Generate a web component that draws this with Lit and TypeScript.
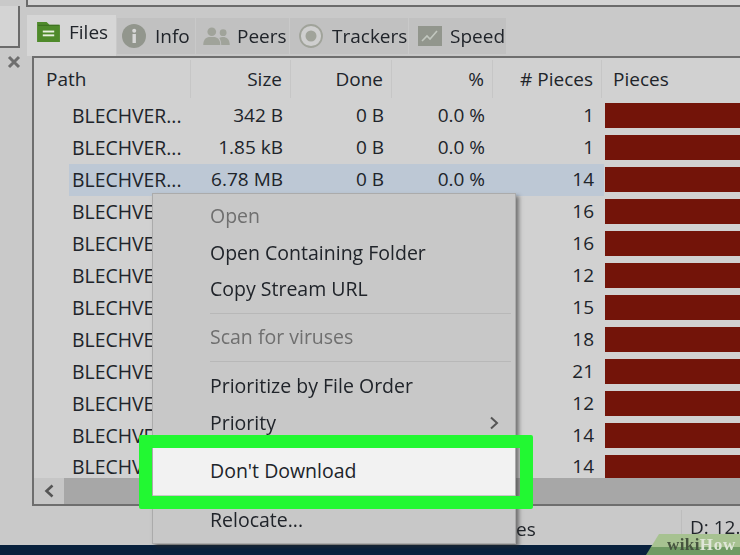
import { LitElement, html, css, svg } from "lit";
import { customElement } from "lit/decorators.js";

const counts = [1, 1, 14, 16, 16, 12, 15, 18, 21, 12, 14, 14];
const sizes = ["342 B", "1.85 kB", "6.78 MB"];

@customElement("app-root")
export class AppRoot extends LitElement {
  static styles = css`
    :host {
      display: block;
      position: relative;
      width: 740px;
      height: 555px;
      overflow: hidden;
      background: #c9c9c9;
      color: #20242a;
      font-family: "Open Sans", "Noto Sans", sans-serif;
      font-size: 19px;
    }
    .app {
      height: 555px;
      display: flex;
      flex-direction: column;
      filter: blur(0.45px);
    }
    .top {
      height: 7px;
      margin-left: 26px;
      flex: none;
      background: #d4d4d4;
      border: solid #6b6b6b;
      border-width: 0 0 2px 2px;
      box-sizing: border-box;
    }
    .middle { flex: 1; display: flex; min-height: 0; }
    .side { width: 32px; flex: none; display: flex; flex-direction: column; align-items: flex-start; }
    .side-box {
      width: 20px;
      height: 42px;
      box-sizing: border-box;
      background: #d4d4d4;
      border: solid #6b6b6b;
      border-width: 0 2px 2px 0;
      margin-top: -1px;
    }
    .close { margin: 7px 0 0 7px; display: block; }
    .main { flex: 1; min-width: 0; display: flex; flex-direction: column; }
    .tabs { display: flex; height: 49px; flex: none; padding: 8px 0 0 0; box-sizing: border-box; margin-left: -5px; gap: 1px; }
    .tab {
      display: flex;
      align-items: center;
      box-sizing: border-box;
      background: #c1c1c1;
      margin-top: 3px;
      height: 36px;
    }
    .tab.active { background: #d6d6d6; margin-top: 0; height: 41px; padding-bottom: 7px; }
    .t-files { width: 89px; padding-left: 10px; gap: 9px; }
    .t-info { width: 78px; padding-left: 5px; gap: 9px; }
    .t-peers { width: 93px; padding-left: 7px; gap: 7px; }
    .t-trackers { width: 118px; padding-left: 9px; gap: 9px; }
    .t-speed { width: 97px; padding-left: 9px; gap: 8px; }
    .panel {
      height: 450px;
      flex: none;
      box-sizing: border-box;
      background: #d1d1d1;
      border: solid #6e6e6e;
      border-width: 2px 0 2px 2px;
      display: flex;
      flex-direction: column;
      position: relative;
    }
    .row, .head {
      display: grid;
      grid-template-columns: 157px 100px 101px 101px 109px 1fr;
    }
    .head { height: 42px; flex: none; }
    .head > div { padding-right: 8px; text-align: right; border-right: 1px solid #c6c6c6; height: 38px; margin-top: 2px; line-height: 38px; }
    .head > div:first-child { text-align: left; padding-left: 12px; }
    .head > div:last-child { text-align: left; padding-left: 11px; border-right: none; }
    .rows { flex: 1; min-height: 0; overflow: hidden; }
    .row { height: 32px; line-height: 31px; position: relative; }
    .row > div { padding-right: 8px; text-align: right; white-space: nowrap; overflow: hidden; }
    .row > div:first-child { text-align: left; padding-left: 38px; padding-right: 0; font-size: 19.4px; }
    .row.sel { background: linear-gradient(to right, transparent 35px, #bdc8d5 35px, #bdc8d5 570px, transparent 570px); }
    .row > .bar { padding: 0; margin: 3px 0 4px 3px; background: #731409; height: 25px; }
    .row.last { height: 26px; line-height: 29px; }
    .row.last .bar { height: 23px; margin-bottom: 0; }
    .scroll { height: 26px; flex: none; background: #a7a7a7; display: flex; }
    .scroll .btn { width: 30px; background: #c6c6c6; display: flex; align-items: center; justify-content: center; }
    .status {
      flex: 1;
      position: relative;
      margin-left: -32px;
      background: #c9c9c9;
      min-height: 0;
    }
    .status .es { position: absolute; left: 516px; top: 10px; }
    .status .d { position: absolute; left: 690px; top: 8px; white-space: nowrap; }
    .status .div { position: absolute; left: 681px; top: 4px; bottom: 0; width: 1px; background: #bdbdbd; }
    .task { height: 10px; flex: none; background: #08213d; }

    .menu {
      position: absolute;
      left: 152px;
      top: 193px;
      width: 364px;
      height: 351px;
      box-sizing: border-box;
      background: #c8c8c8;
      border: 1px solid #ababab;
      box-shadow: 3px 3px 4px rgba(40, 40, 40, 0.55);
      padding-top: 4px;
      filter: blur(0.45px);
    }
    .mi { height: 36.5px; line-height: 35.5px; padding-left: 57px; position: relative; white-space: nowrap; font-size: 19.5px; }
    .mi.dis { color: #6f6f6f; }
    .mi.hot { background: #f2f2f2; height: 48px; line-height: 47px; margin-top: 6px; margin-bottom: 7px; }
    .mi .arrow { position: absolute; right: 16px; top: 11px; display: block; }
    .sep { height: 1px; background: #b8b8b8; margin: 5px 4px 5px 57px; }
    .sep.b { margin-top: 6px; margin-bottom: 6px; }
    .mark {
      position: absolute;
      left: 139px;
      top: 435px;
      width: 394px;
      height: 74px;
      box-sizing: border-box;
      border: 13px solid #22f832;
      border-radius: 2px;
    }
    .wh {
      position: absolute;
      right: 0;
      bottom: 0;
      width: 94px;
      height: 21px;
      background: linear-gradient(to bottom, #a7c291 0, #a7c291 60%, #6f9a63 60%, #6f9a63 100%);
      clip-path: polygon(13px 0, 100% 0, 100% 100%, 0 100%);
      font-family: "Liberation Serif", serif;
      font-weight: 700;
      font-size: 17px;
      line-height: 22px;
      padding-left: 21px;
      box-sizing: border-box;
      color: #46543f;
      white-space: nowrap;
      letter-spacing: 0.4px;
      filter: blur(0.4px);
    }
    .wh b { color: #dfe6d8; letter-spacing: 0.8px; }
  `;

  private icon(kind: string) {
    const g = "#92968d";
    if (kind === "files")
      return svg`<svg width="23" height="20" viewBox="0 0 24 21"><path d="M0 0h10l3 3h11v18H0z" fill="#4f8a2b"/><path d="M1 3.500h22" stroke="#3b6d20" stroke-width="1"/><rect x="6" y="9" width="12" height="2" fill="#e8f0e0"/><rect x="6" y="13" width="12" height="2" fill="#e8f0e0"/></svg>`;
    if (kind === "info")
      return svg`<svg width="24" height="24" viewBox="0 0 24 24"><circle cx="12" cy="12" r="12" fill="${g}"/><rect x="10.500" y="10" width="3.400" height="9" fill="#d8d8d8"/><circle cx="12.200" cy="6.800" r="2" fill="#d8d8d8"/></svg>`;
    if (kind === "peers")
      return svg`<svg width="27" height="18" viewBox="0 0 28 19"><g fill="#a0a39a"><circle cx="9" cy="5" r="4.600"/><path d="M0 19c0-6 3-8 6-8.500h6c3 .5 6 2.500 6 8.500z"/><circle cx="21" cy="6" r="3.600"/><path d="M19 19c0-3-.8-5.500-2-7.500 1-.8 2.500-1 4-1 3.500 0 7 2 7 8.500z"/></g></svg>`;
    if (kind === "trackers")
      return svg`<svg width="24" height="24" viewBox="0 0 24 24"><circle cx="12" cy="12" r="11" fill="#cfcfcf" stroke="#a0a39a" stroke-width="1.800"/><circle cx="12" cy="12" r="5.500" fill="#a0a39a"/></svg>`;
    return svg`<svg width="24" height="20" viewBox="0 0 24 20"><rect width="24" height="20" fill="${g}"/><path d="M4 15l5-5 3 3 7-8" fill="none" stroke="#c2c7bf" stroke-width="1.600"/></svg>`;
  }

  render() {
    const tabs = [
      ["files", "Files", "t-files active"],
      ["info", "Info", "t-info"],
      ["peers", "Peers", "t-peers"],
      ["trackers", "Trackers", "t-trackers"],
      ["speed", "Speed", "t-speed"],
    ];
    return html`
      <div class="app">
        <div class="top"></div>
        <div class="middle">
          <div class="side">
            <div class="side-box"></div>
            <svg class="close" width="14" height="14" viewBox="0 0 14 14"><path d="M2 2l10 10M12 2L2 12" stroke="#6e6e6e" stroke-width="3"/></svg>
          </div>
          <div class="main">
            <div class="tabs">
              ${tabs.map(
                ([k, t, c]) => html`<div class="tab ${c}">${this.icon(k)}<span>${t}</span></div>`
              )}
            </div>
            <div class="panel">
              <div class="head">
                <div>Path</div><div>Size</div><div>Done</div><div>%</div><div># Pieces</div><div>Pieces</div>
              </div>
              <div class="rows">
                ${counts.map(
                  (n, i) => html`<div class="row ${i === 2 ? "sel" : ""} ${i === 11 ? "last" : ""}">
                    <div>BLECHVER...</div>
                    <div>${sizes[i] ?? ""}</div>
                    <div>0 B</div>
                    <div>0.0 %</div>
                    <div>${n}</div>
                    <div class="bar"></div>
                  </div>`
                )}
              </div>
              <div class="scroll">
                <div class="btn"><svg width="12" height="14" viewBox="0 0 12 14"><path d="M9.500 1.500L3.500 7l6 5.500" fill="none" stroke="#555" stroke-width="2.600"/></svg></div>
              </div>
            </div>
            <div class="status">
              <span class="es">es</span>
              <span class="div"></span>
              <span class="d">D: 12.2</span>
            </div>
          </div>
        </div>
        <div class="task"></div>
      </div>
      <div class="menu">
        <div class="mi dis">Open</div>
        <div class="mi">Open Containing Folder</div>
        <div class="mi">Copy Stream URL</div>
        <div class="sep"></div>
        <div class="mi dis">Scan for viruses</div>
        <div class="sep b"></div>
        <div class="mi">Prioritize by File Order</div>
        <div class="mi">Priority<svg class="arrow" width="10" height="14" viewBox="0 0 10 14"><path d="M2 1.500L8 7l-6 5.500" fill="none" stroke="#555" stroke-width="2"/></svg></div>
        <div class="mi hot">Don't Download</div>
        <div class="mi">Relocate...</div>
      </div>
      <div class="mark"></div>
      <div class="wh">wiki<b>How</b></div>
    `;
  }
}
